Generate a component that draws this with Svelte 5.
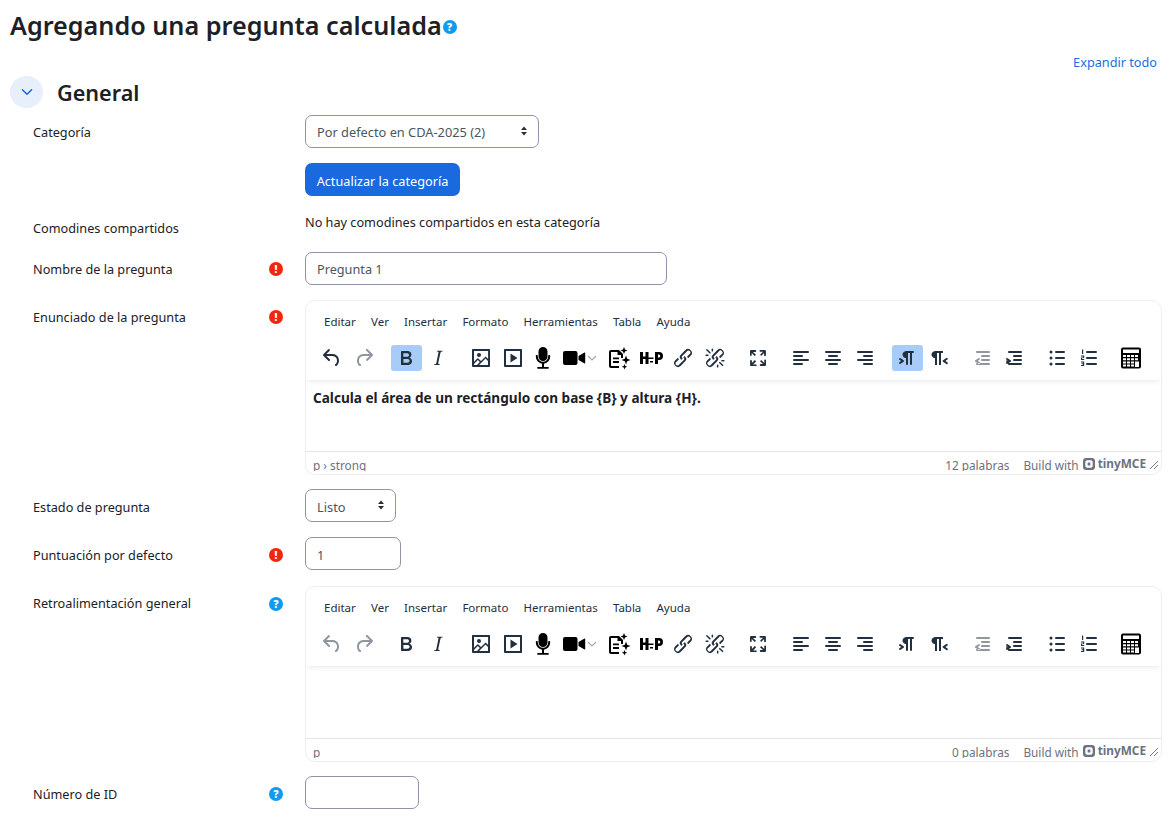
<script>
    const menus = ['Editar', 'Ver', 'Insertar', 'Formato', 'Herramientas', 'Tabla', 'Ayuda'];

    // calculator body: outer plate with the display and keys cut out
    let calc = 'M4 1.5h16a2 2 0 0 1 2 2v17a2 2 0 0 1-2 2H4a2 2 0 0 1-2-2v-17a2 2 0 0 1 2-2ZM4 3.5v3.5h16V3.5Z';
    for (let r = 0; r < 4; r++) {
        for (let c = 0; c < 4; c++) {
            const x = 4 + c * 4;
            const y = 9 + r * 3.2;
            if (c === 3 && r > 1) continue;
            calc += `M${x} ${y}h3v2h-3Z`;
        }
    }
    calc += 'M16 15.4h4v5.5h-4Z';

    const icons = {
        undo: 'M6.4 8H12c3.7 0 6.2 2 6.8 5.1.6 2.7-.4 5.6-2.3 6.8a1 1 0 0 1-1-1.8c1.1-.6 1.8-2.7 1.4-4.6-.5-2.1-2.1-3.5-4.9-3.5H6.4l3.3 3.3a1 1 0 1 1-1.4 1.4l-5-5a1 1 0 0 1 0-1.4l5-5a1 1 0 0 1 1.4 1.4L6.4 8Z',
        redo: 'M17.6 10H12c-2.8 0-4.4 1.4-4.9 3.5-.4 2 .3 4 1.4 4.6a1 1 0 1 1-1 1.8c-2-1.2-2.9-4.1-2.3-6.8.6-3 3-5.1 6.8-5.1h5.6l-3.3-3.3a1 1 0 1 1 1.4-1.4l5 5a1 1 0 0 1 0 1.4l-5 5a1 1 0 0 1-1.4-1.4l3.3-3.3Z',
        bold: 'M7.8 19c-.3 0-.5 0-.6-.2l-.2-.5V5.7c0-.2 0-.4.2-.5l.6-.2h5c1.5 0 2.7.3 3.5 1 .7.6 1.1 1.4 1.1 2.5a3 3 0 0 1-.6 1.9c-.4.6-1 1-1.6 1.2.4.1.9.3 1.3.6s.8.7 1 1.2c.4.4.5 1 .5 1.6 0 1.3-.4 2.3-1.3 3-.8.7-2.1 1-3.8 1H7.8Zm5-8.3c.6 0 1.2-.1 1.6-.5.4-.3.6-.7.6-1.3 0-1.1-.8-1.7-2.3-1.7H9.3v3.5h3.4Zm.5 6c.7 0 1.3-.1 1.7-.4.4-.4.6-.9.6-1.5s-.2-1-.7-1.4c-.4-.3-1-.4-2-.4H9.4v3.8h4Z',
        italic: 'm16.7 4.7-.1.9h-.3c-.6 0-1 0-1.4.3-.3.3-.4.6-.5 1.1l-2.1 9.8v.6c0 .5.4.8 1.4.8h.2l-.2.8H8l.2-.8h.2c1.1 0 1.8-.5 2-1.5l2-9.8.1-.5c0-.6-.4-.8-1.4-.8h-.3l.2-.9h5.8Z',
        image: 'm5 15.7 3.3-3.2c.3-.3.7-.3 1 0L12 15l4.1-4c.3-.4.8-.4 1 0l2 1.9V5H5v10.7ZM5 18V19h3l2.8-2.9-2-2L5 17.9Zm14-3-2.5-2.4-6.4 6.5H19v-4ZM4 3h16c.6 0 1 .4 1 1v16c0 .6-.4 1-1 1H4a1 1 0 0 1-1-1V4c0-.6.4-1 1-1Zm6 8a2 2 0 1 0 0-4 2 2 0 0 0 0 4Z',
        media: 'M4 3h16c.6 0 1 .4 1 1v16c0 .6-.4 1-1 1H4a1 1 0 0 1-1-1V4c0-.6.4-1 1-1Zm1 2v14h14V5H5Zm4.5 2.5 7 4.5-7 4.5v-9Z',
        mic: 'M12 1a4.5 4.5 0 0 1 4.5 4.5v5a4.5 4.5 0 0 1-9 0v-5A4.5 4.5 0 0 1 12 1ZM5.8 9c.6 0 1 .4 1 1v.6a5.2 5.2 0 0 0 10.4 0V10c0-.6.4-1 1-1s1 .4 1 1v.6a7.2 7.2 0 0 1-6.2 7.1V21h4c.5 0 .9.4.9.9s-.4.8-.9.8H7c-.5 0-.9-.3-.9-.8s.4-.9.9-.9h4v-3.3a7.2 7.2 0 0 1-6.2-7.1V10c0-.6.4-1 1-1Z',
        video: 'M3 5h10.5a2 2 0 0 1 2 2v10a2 2 0 0 1-2 2H3a2 2 0 0 1-2-2V7a2 2 0 0 1 2-2Zm13.500 5 6-3.500c.3-.2.7 0 .7.4v10.200c0 .4-.4.6-.7.4l-6-3.500v-4Z',
        ai: 'M4 4h8l4 4v4h-2V9h-3.500V6H4v14h8v2H4a2 2 0 0 1-2-2V6a2 2 0 0 1 2-2Zm2 7.500h6v1.800H6v-1.800Zm0 3.600h6v1.800H6v-1.800ZM17 1l1 2.500 2.500 1-2.500 1-1 2.500-1-2.500-2.500-1 2.500-1 1-2.500ZM19 9.500l1.200 3.300 3.300 1.200-3.300 1.200L19 18.500l-1.200-3.300-3.300-1.200 3.300-1.200L19 9.500ZM17.500 18l.8 2 2 .8-2 .8-.8 2-.8-2-2-.8 2-.8.8-2Z',
        h5p: 'M1 6h3v4.500h2.500V6h3v12h-3v-5H4v5H1V6Zm8.500 5.500h5v1.600h-5v-1.600ZM16 6h4a4 4 0 0 1 0 8h-1v4h-3V6Zm3 2.500v3h.8a1.500 1.500 0 0 0 0-3H19ZM11 15h3v1.600h-3V15Z',
        link: 'M6.200 12.300a1 1 0 0 1 1.400 1.400l-2 2a2 2 0 1 0 2.600 2.800l4.800-4.800a1 1 0 0 0 0-1.400 1 1 0 1 1 1.400-1.300 2.900 2.900 0 0 1 0 4L9.600 20a3.900 3.900 0 0 1-5.500-5.500l2-2Zm11.600-.6a1 1 0 0 1-1.400-1.400l2-2a2 2 0 1 0-2.600-2.800L11 10.300a1 1 0 0 0 0 1.400A1 1 0 1 1 9.600 13a2.900 2.900 0 0 1 0-4L14.400 4a3.900 3.900 0 0 1 5.500 5.500l-2 2Z',
        unlink: 'M6.200 12.300a1 1 0 0 1 1.400 1.400l-2.100 2a2 2 0 1 0 2.700 2.800l4.800-4.800a1 1 0 0 0 0-1.400 1 1 0 1 1 1.400-1.300 2.900 2.900 0 0 1 0 4L9.600 20a3.900 3.900 0 0 1-5.500-5.500l2-2Zm11.600-.6a1 1 0 0 1-1.400-1.400l2.100-2a2 2 0 1 0-2.700-2.800L11 10.300a1 1 0 0 0 0 1.400A1 1 0 1 1 9.600 13a2.900 2.900 0 0 1 0-4L14.400 4a3.900 3.900 0 0 1 5.500 5.500l-2 2ZM7.600 6.300a.8.8 0 0 1-1 1.100L3.300 4.200a.7.7 0 1 1 1-1l3.200 3.100ZM5.100 8.600a.8.8 0 0 1 0 1.500H3a.8.8 0 0 1 0-1.500H5Zm5-3.500a.8.8 0 0 1-1.500 0V3a.8.8 0 0 1 1.500 0V5Zm6 11.800a.8.8 0 0 1 1-1l3.200 3.200a.8.8 0 0 1-1 1L16 17Zm-2.200 2a.8.8 0 0 1 1.500 0V21a.8.8 0 0 1-1.500 0V19Zm5-3.500a.7.7 0 1 1 0-1.500H21a.8.8 0 0 1 0 1.500H19Z',
        fullscreen: 'm15.300 10-1.200-1.300 2.900-3h-2.300a.9.900 0 1 1 0-1.700H19c.5 0 .9.400.9.900v4.400a.9.900 0 1 1-1.800 0V7l-2.900 3Zm0 4 3 3v-2.300a.9.900 0 1 1 1.700 0V19c0 .5-.4.9-.9.900h-4.400a.9.900 0 1 1 0-1.800H17l-3-2.900 1.300-1.200ZM10 15.400l-2.900 3h2.300a.9.900 0 1 1 0 1.700H5a.9.900 0 0 1-.9-.9v-4.400a.9.900 0 1 1 1.800 0V17l2.900-3 1.200 1.300ZM8.700 10 5.700 7v2.300a.9.900 0 0 1-1.700 0V5c0-.5.4-.9.9-.9h4.400a.9.900 0 0 1 0 1.800H7l3 2.900-1.300 1.200Z',
        left: 'M5 5h14a1 1 0 0 1 0 2H5a1 1 0 1 1 0-2Zm0 4h8a1 1 0 0 1 0 2H5a1 1 0 1 1 0-2Zm0 8h8a1 1 0 0 1 0 2H5a1 1 0 0 1 0-2Zm0-4h14a1 1 0 0 1 0 2H5a1 1 0 0 1 0-2Z',
        center: 'M5 5h14a1 1 0 0 1 0 2H5a1 1 0 1 1 0-2Zm3 4h8a1 1 0 0 1 0 2H8a1 1 0 1 1 0-2Zm0 8h8a1 1 0 0 1 0 2H8a1 1 0 0 1 0-2Zm-3-4h14a1 1 0 0 1 0 2H5a1 1 0 0 1 0-2Z',
        right: 'M5 5h14a1 1 0 0 1 0 2H5a1 1 0 1 1 0-2Zm6 4h8a1 1 0 0 1 0 2h-8a1 1 0 0 1 0-2Zm0 8h8a1 1 0 0 1 0 2h-8a1 1 0 0 1 0-2Zm-6-4h14a1 1 0 0 1 0 2H5a1 1 0 0 1 0-2Z',
        ltr: 'M11 5h7a1 1 0 0 1 0 2h-1v11a1 1 0 0 1-2 0V7h-2v11a1 1 0 0 1-2 0v-6c-.5 0-1 0-1.400-.3A3.400 3.400 0 0 1 7.800 10a3.300 3.300 0 0 1 0-2.800 3.400 3.400 0 0 1 1.800-1.800L11 5ZM4.400 16.200 6.200 15l-1.800-1.200a1 1 0 0 1 1.200-1.600l3 2a1 1 0 0 1 0 1.600l-3 2a1 1 0 1 1-1.200-1.600Z',
        rtl: 'M8 5h8v2h-2v12h-2V7h-2v12H8v-7c-.5 0-1 0-1.400-.3A3.400 3.400 0 0 1 4.800 10a3.300 3.300 0 0 1 0-2.800 3.400 3.400 0 0 1 1.800-1.800L8 5Zm12 11.200a1 1 0 1 1-1 1.600l-3-2a1 1 0 0 1 0-1.600l3-2a1 1 0 1 1 1 1.600L18.400 15l1.800 1.200Z',
        outdent: 'M7 5h12a1 1 0 0 1 0 2H7a1 1 0 1 1 0-2Zm5 4h7a1 1 0 0 1 0 2h-7a1 1 0 0 1 0-2Zm0 4h7a1 1 0 0 1 0 2h-7a1 1 0 0 1 0-2Zm-5 4h12a1 1 0 0 1 0 2H7a1 1 0 0 1 0-2Zm2.600-3.800L7.800 15l1.800 1.200a1 1 0 0 1-1.200 1.600l-3-2a1 1 0 0 1 0-1.600l3-2a1 1 0 1 1 1.200 1.600Z',
        indent: 'M7 5h12a1 1 0 0 1 0 2H7a1 1 0 1 1 0-2Zm5 4h7a1 1 0 0 1 0 2h-7a1 1 0 0 1 0-2Zm0 4h7a1 1 0 0 1 0 2h-7a1 1 0 0 1 0-2Zm-5 4h12a1 1 0 0 1 0 2H7a1 1 0 0 1 0-2Zm-2.600-3.800L6.200 15l-1.800-1.200a1 1 0 0 1 1.200-1.600l3 2a1 1 0 0 1 0 1.600l-3 2a1 1 0 1 1-1.200-1.600Z',
        bullist: 'M11 5h8a1 1 0 0 1 0 2h-8a1 1 0 0 1 0-2Zm0 6h8a1 1 0 0 1 0 2h-8a1 1 0 0 1 0-2Zm0 6h8a1 1 0 0 1 0 2h-8a1 1 0 0 1 0-2ZM6 4.500a1.500 1.500 0 1 1 0 3 1.500 1.500 0 0 1 0-3Zm0 6a1.500 1.500 0 1 1 0 3 1.500 1.500 0 0 1 0-3Zm0 6a1.500 1.500 0 1 1 0 3 1.500 1.500 0 0 1 0-3Z',
        numlist: 'M10 5h9a1 1 0 0 1 0 2h-9a1 1 0 0 1 0-2Zm0 6h9a1 1 0 0 1 0 2h-9a1 1 0 0 1 0-2Zm0 6h9a1 1 0 0 1 0 2h-9a1 1 0 0 1 0-2ZM5 3.500h1.200V8H5V3.500Zm-1 6h3.200v2.600H5.200v.8h2V14H4v-2.500h2.100v-1H4v-1Zm0 6h3.200V20H4v-1h2.100v-.8H4.600v-.9h1.500v-.8H4v-1Z',
        calc
    };

    const groups = [
        [{ icon: 'undo' }, { icon: 'redo', dim: true }],
        [{ icon: 'bold', on: 'bold' }, { icon: 'italic' }],
        [
            { icon: 'image' },
            { icon: 'media' },
            { icon: 'mic', kind: 'narrow', black: true },
            { icon: 'video', kind: 'split', black: true },
            { icon: 'ai', black: true },
            { icon: 'h5p', black: true },
            { icon: 'link' },
            { icon: 'unlink' }
        ],
        [{ icon: 'fullscreen' }],
        [{ icon: 'left' }, { icon: 'center' }, { icon: 'right' }],
        [{ icon: 'ltr', on: 'ltr' }, { icon: 'rtl' }],
        [{ icon: 'outdent', dim: true }, { icon: 'indent' }],
        [{ icon: 'bullist' }, { icon: 'numlist' }],
        [{ icon: 'calc', black: true }]
    ];
</script>

{#snippet help(cls = '')}
    <span class="badge help {cls}">?</span>
{/snippet}

{#snippet required()}
    <span class="badge req">!</span>
{/snippet}

{#snippet caret()}
    <svg class="caret" width="10" height="12" viewBox="0 0 10 12" aria-hidden="true">
        <path d="M5 1.500 8 5H2ZM5 10.500 2 7h6Z" />
    </svg>
{/snippet}

{#snippet editor(active, path, words, content)}
    <div class="editor">
        <div class="editor-head">
            <div class="menubar">
                {#each menus as m}
                    <span>{m}</span>
                {/each}
            </div>
            <div class="toolbar">
                {#each groups as group}
                    <div class="tb-group">
                        {#each group as b}
                            <button
                                type="button"
                                class="tb {b.kind ?? ''}"
                                class:on={active && b.on}
                                class:dim={b.dim || (!active && b.icon === 'undo')}
                                class:black={b.black}
                            >
                                <svg width="24" height="24" viewBox="0 0 24 24" fill-rule="evenodd" aria-hidden="true">
                                    <path d={icons[b.icon]} />
                                </svg>
                                {#if b.kind === 'split'}
                                    <svg class="chev" width="10" height="6" viewBox="0 0 10 6" aria-hidden="true">
                                        <path d="M1 1l4 4 4-4" />
                                    </svg>
                                {/if}
                            </button>
                        {/each}
                    </div>
                {/each}
            </div>
        </div>
        <div class="editor-body">{content}</div>
        <div class="statusbar">
            <span class="status-text path">{path}</span>
            <span class="status-text words">{words} palabras</span>
            <span class="status-text">Build with</span>
            <span class="brand">
                <svg width="12" height="12" viewBox="0 0 13 13" aria-hidden="true">
                    <path fill-rule="evenodd" d="M3.500 0H9.500A3.500 3.500 0 0 1 13 3.500V9.500A3.500 3.500 0 0 1 9.500 13H3.500A3.500 3.500 0 0 1 0 9.500V3.500A3.500 3.500 0 0 1 3.500 0ZM4.500 2.500A2 2 0 0 0 2.500 4.500V8.500A2 2 0 0 0 4.500 10.500H8.500A2 2 0 0 0 10.500 8.500V4.500A2 2 0 0 0 8.500 2.500ZM5 5H8V8H5Z" />
                </svg>
                tinyMCE
            </span>
            <svg class="grip" width="8" height="8" viewBox="0 0 8 8" aria-hidden="true">
                <path d="M0 8 8 0M4 8 8 4" />
            </svg>
        </div>
    </div>
{/snippet}

<main class="page">
    <h1>Agregando una pregunta calculada{@render help('title-help')}</h1>

    <div class="collapse-row"><a href="#top">Expandir todo</a></div>

    <div class="section-head">
        <span class="chevron-btn">
            <svg width="16" height="16" viewBox="0 0 14 14" aria-hidden="true">
                <path d="M3 5l4 4 4-4" />
            </svg>
        </span>
        <h2>General</h2>
    </div>

    <div class="form">
        <div class="row">
            <div class="label center">Categoría</div>
            <div class="mark"></div>
            <div class="field">
                <div class="select-wrap cat">
                    <select>
                        <option>Por defecto en CDA-2025 (2)</option>
                    </select>
                    {@render caret()}
                </div>
                <button type="button" class="primary">Actualizar la categoría</button>
            </div>
        </div>

        <div class="row static">
            <div class="label">Comodines compartidos</div>
            <div class="mark"></div>
            <div class="field static-text">No hay comodines compartidos en esta categoría</div>
        </div>

        <div class="row">
            <div class="label center">Nombre de la pregunta</div>
            <div class="mark center">{@render required()}</div>
            <div class="field"><input class="w-name" type="text" value="Pregunta 1" /></div>
        </div>

        <div class="row tight">
            <div class="label top">Enunciado de la pregunta</div>
            <div class="mark top">{@render required()}</div>
            <div class="field">
                {@render editor(true, 'p › strong', 12, 'Calcula el área de un rectángulo con base {B} y altura {H}.')}
            </div>
        </div>

        <div class="row low">
            <div class="label center">Estado de pregunta</div>
            <div class="mark"></div>
            <div class="field">
                <div class="select-wrap state">
                    <select>
                        <option>Listo</option>
                    </select>
                    {@render caret()}
                </div>
            </div>
        </div>

        <div class="row loose low">
            <div class="label center">Puntuación por defecto</div>
            <div class="mark center">{@render required()}</div>
            <div class="field"><input class="w-mark" type="text" value="1" /></div>
        </div>

        <div class="row tight">
            <div class="label top">Retroalimentación general</div>
            <div class="mark top help-mark">{@render help()}</div>
            <div class="field tall">
                {@render editor(false, 'p', 0, '')}
            </div>
        </div>

        <div class="row low">
            <div class="label center">Número de ID</div>
            <div class="mark center">{@render help()}</div>
            <div class="field"><input class="w-id" type="text" /></div>
        </div>
    </div>
</main>

<style>
    :global(body) {
        background: #fff;
    }

    .page {
        box-sizing: border-box;
        width: 1173px;
        height: 817px;
        overflow: hidden;
        padding: 8px 11px 0 10px;
        font-family: "Noto Sans", "Open Sans", sans-serif;
        font-size: 12.7px;
        color: #1d2125;
    }

    h1 {
        margin: 0;
        display: flex;
        align-items: center;
        height: 34px;
        font-size: 25.2px;
        font-weight: 600;
        line-height: 34px;
    }

    .collapse-row {
        display: flex;
        justify-content: flex-end;
        height: 34px;
        padding: 11px 5px 0 0;
        box-sizing: border-box;
        line-height: 18px;
    }
    .collapse-row a {
        color: #1a6fe0;
        text-decoration: none;
    }

    .section-head {
        display: flex;
        align-items: center;
        gap: 14px;
        height: 32px;
    }
    .section-head h2 {
        margin: 0;
        font-size: 21.6px;
        font-weight: 600;
    }
    .chevron-btn {
        width: 33px;
        height: 32px;
        border-radius: 50%;
        background: #e7effb;
        display: flex;
        align-items: center;
        justify-content: center;
    }
    .chevron-btn path {
        fill: none;
        stroke: #1a66d8;
        stroke-width: 1.300;
        stroke-linecap: round;
        stroke-linejoin: round;
    }

    /* ── Form rows ── */
    .form {
        padding-top: 7px;
    }
    .row {
        display: grid;
        grid-template-columns: 236px 36px 1fr;
        padding-left: 23px;
        margin-bottom: 15px;
    }
    .row.tight {
        margin-bottom: 14px;
    }
    .row.loose {
        margin-bottom: 16px;
    }
    .row.static {
        height: 26px;
    }
    .label {
        line-height: 18px;
    }
    .label.center {
        padding-top: 8px;
    }
    .row.low .label.center {
        padding-top: 9px;
    }
    .row.low input,
    .row.low select {
        padding-top: 2px;
    }
    .row.static .label {
        padding-top: 8px;
    }
    .label.top {
        padding-top: 8px;
    }
    .mark {
        display: flex;
        align-items: flex-start;
    }
    .mark.center {
        padding-top: 10px;
    }
    .row.low .mark.center {
        padding-top: 11px;
    }
    .mark.top {
        padding-top: 10px;
    }
    .mark.help-mark {
        padding-top: 11px;
    }
    .field {
        display: flex;
        flex-direction: column;
        align-items: flex-start;
        gap: 15px;
        min-width: 0;
    }
    .static-text {
        line-height: 22px;
        display: block;
    }

    /* ── Badges ── */
    .badge {
        width: 14px;
        height: 14px;
        border-radius: 50%;
        color: #fff;
        font-family: "Open Sans", sans-serif;
        font-size: 10px;
        font-weight: 800;
        line-height: 14px;
        text-align: center;
        flex-shrink: 0;
    }
    .help {
        background: #0f9bf0;
    }
    .req {
        background: #f1260c;
    }
    .title-help {
        margin: 3px 0 0 1px;
    }

    /* ── Inputs ── */
    input,
    select {
        box-sizing: border-box;
        height: 33px;
        border: 1px solid #8f94a8;
        border-radius: 7px;
        background: #fff;
        padding: 0 11px;
        font: inherit;
        color: #4b5563;
        outline: none;
    }
    select {
        appearance: none;
        width: 100%;
        font-size: 12.8px;
    }
    .select-wrap {
        position: relative;
    }
    .select-wrap.cat {
        width: 234px;
    }
    .select-wrap.state {
        width: 91px;
    }
    .caret {
        position: absolute;
        right: 10px;
        top: 10px;
        pointer-events: none;
        fill: #2a2f36;
    }
    .w-name {
        width: 362px;
    }
    .w-mark {
        width: 96px;
    }
    .w-id {
        width: 114px;
    }

    .primary {
        box-sizing: border-box;
        height: 33px;
        width: 155px;
        border: none;
        border-radius: 7px;
        background: #1a69de;
        color: #fff;
        font: inherit;
        padding: 2px 0 0;
    }

    /* ── Editor ── */
    .editor {
        box-sizing: border-box;
        width: 857px;
        height: 175px;
        border: 1px solid #eceef0;
        border-radius: 10px;
        display: flex;
        flex-direction: column;
        overflow: hidden;
    }
    .tall .editor {
        height: 176px;
    }
    .editor-head {
        height: 79px;
        flex-shrink: 0;
        box-sizing: border-box;
        box-shadow: 0 2px 6px -2px rgba(34, 47, 62, 0.16);
        position: relative;
    }
    .menubar {
        display: flex;
        gap: 15.2px;
        padding: 11px 0 0 18px;
        height: 33px;
        box-sizing: border-box;
        font-size: 11.5px;
        line-height: 20px;
        color: #222f3e;
    }
    .toolbar {
        display: flex;
        gap: 11.7px;
        padding-left: 10.3px;
        height: 26px;
        margin-top: 11px;
    }
    .tb-group {
        display: flex;
        gap: 1px;
    }
    .tb {
        width: 31px;
        height: 26px;
        padding: 0;
        border: none;
        border-radius: 3px;
        background: none;
        display: flex;
        align-items: center;
        justify-content: center;
        fill: #222f3e;
    }
    .tb.on {
        background: #a6ccf7;
    }
    .tb.dim {
        opacity: 0.5;
    }
    .tb.black {
        fill: #000;
    }
    .tb.narrow {
        width: 26px;
    }
    .tb.split {
        width: 46px;
        gap: 1px;
    }
    .chev {
        fill: none;
        stroke: #a3a8b0;
        stroke-width: 1.200;
        flex-shrink: 0;
    }
    .tb svg {
        flex-shrink: 0;
    }

    .editor-body {
        flex: 1;
        padding: 9px 7px 0;
        font-size: 13.6px;
        font-weight: 700;
        line-height: 18px;
        color: #1d2125;
    }

    .statusbar {
        height: 22px;
        flex-shrink: 0;
        border-top: 1px solid #e4e6e8;
        display: flex;
        align-items: flex-start;
        padding: 0 3px 0 7px;
        font-size: 11.8px;
        color: #6b7280;
    }
    .status-text {
        height: 19px;
        line-height: 27px;
        overflow: hidden;
    }
    .path {
        margin-right: auto;
    }
    .words {
        margin-right: 14px;
    }
    .brand {
        display: flex;
        align-items: center;
        gap: 3px;
        margin: 5px 0 0 4px;
        line-height: 13px;
        font-size: 11.8px;
        font-weight: 700;
        color: #6b7280;
        fill: #6b7280;
    }
    .grip {
        margin: 9px 0 0 4px;
        fill: none;
        stroke: #777f89;
        stroke-width: 1;
    }
</style>
